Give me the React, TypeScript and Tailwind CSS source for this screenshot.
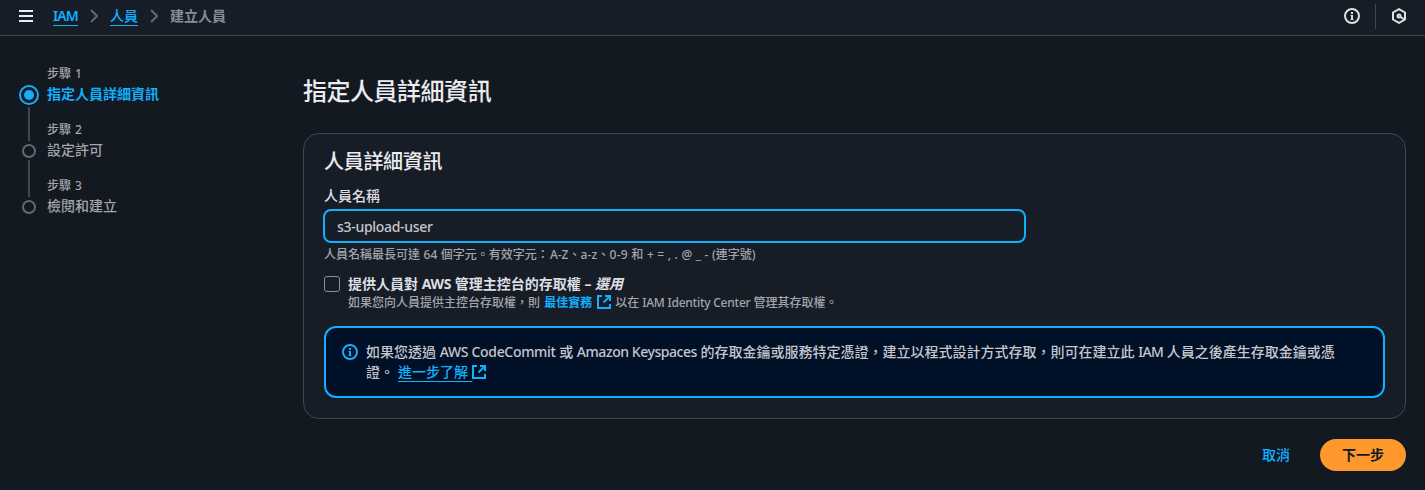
function ExternalIcon({ className }: { className: string }) {
  return (
    <svg viewBox="0 0 14 14" className={className} fill="none" stroke="currentColor" strokeWidth="2">
      <path d="M5 1H1v12h12V9" />
      <path d="M8 1h5v5" />
      <path d="M13 1L6.5 7.5" />
    </svg>
  );
}

function InfoIcon({ className }: { className: string }) {
  return (
    <svg viewBox="0 0 16 16" className={className} fill="none" stroke="currentColor" strokeWidth="2">
      <circle cx="8" cy="8" r="7" />
      <path d="M8 4v2M8 7v5" />
      <path d="M6.5 7.5H8M6.5 11.5h3" strokeWidth="1" />
    </svg>
  );
}

function Chevron() {
  return (
    <svg viewBox="0 0 8 14" className="h-3.5 w-2 text-[#656871]" fill="none" stroke="currentColor" strokeWidth="2">
      <path d="M1 1l6 6-6 6" />
    </svg>
  );
}

const steps = [
  { label: '步驟 1', title: '指定人員詳細資訊', active: true },
  { label: '步驟 2', title: '設定許可', active: false },
  { label: '步驟 3', title: '檢閱和建立', active: false },
];

export default function App() {
  return (
    <div className="flex h-[490px] w-[1425px] flex-col overflow-hidden bg-[#131920] font-['Noto_Sans','Noto_Sans_CJK_TC',sans-serif] text-sm leading-5 font-medium text-[#c6c6cd]">
      <header className="flex h-9 shrink-0 items-center border-b border-[#424650] bg-[#161d26] pb-[3px] pl-[19px]">
        <button aria-label="menu" className="flex h-3 w-3.5 flex-col justify-between">
          <span className="h-0.5 w-full bg-[#ebebf0]" />
          <span className="h-0.5 w-full bg-[#ebebf0]" />
          <span className="h-0.5 w-full bg-[#ebebf0]" />
        </button>
        <nav className="ml-5 flex items-center">
          <a className="h-[19px] w-[25px] border-b border-[#10b0ff] leading-[17px] font-semibold tracking-[-0.9px] text-[#10b0ff]">IAM</a>
          <span className="ml-3 flex"><Chevron /></span>
          <a className="ml-3 h-[19px] w-7 border-b border-[#10b0ff] leading-[17px] text-[#10b0ff]">人員</a>
          <span className="ml-3 flex"><Chevron /></span>
          <span className="ml-3 font-bold text-[#8c8c94]">建立人員</span>
        </nav>
        <div className="ml-auto flex items-center">
          <InfoIcon className="size-4 text-[#dedee3]" />
          <span className="ml-[15px] h-[25px] w-px bg-[#424650]" />
          <svg viewBox="0 0 16 16" className="mr-[18px] ml-[15px] size-4 text-[#dedee3]" fill="none" stroke="currentColor" strokeWidth="2">
            <path d="M8 1.1l6 3.4v7L8 14.9l-6-3.4v-7z" />
            <circle cx="8" cy="8" r="1.5" />
            <path d="M8.5 8.5l5 2.8" />
          </svg>
        </div>
      </header>

      <div className="flex flex-1">
        <ol className="ml-[19px] w-[284px] shrink-0 pt-[29px]">
          {steps.map((step, i) => (
            <li key={step.label} className="flex h-14">
              <div className="flex w-5 flex-col items-center">
                {i > 0 ? <span className="h-5 w-0.5 shrink-0 bg-[#424650]" /> : <span className="h-5 shrink-0" />}
                {step.active ? (
                  <span className="flex size-5 shrink-0 items-center justify-center rounded-full border-2 border-[#10b0ff]">
                    <span className="size-2.5 rounded-full bg-[#10b0ff]" />
                  </span>
                ) : (
                  <span className="mt-[3px] size-3.5 shrink-0 rounded-full border-2 border-[#656871]" />
                )}
                {i < 2 && <span className="mt-0.5 w-0.5 flex-1 bg-[#424650]" />}
              </div>
              <div className="ml-2">
                <div className="h-[19px] text-xs leading-[18px] text-[#a4a4ad] [word-spacing:1px]">{step.label}</div>
                <div className={step.active ? 'leading-5 font-bold text-[#10b0ff]' : 'leading-5 text-[#a4a4ad]'}>{step.title}</div>
              </div>
            </li>
          ))}
        </ol>

        <main className="w-[1103px] pt-10">
          <h1 className="h-[30px] text-2xl leading-[30px] tracking-[-0.48px] text-[#ebebf0]">指定人員詳細資訊</h1>
          <section className="mt-[27px] h-[286px] rounded-2xl border border-[#424650] bg-[#161d26] px-5 pt-4">
            <h2 className="h-6 text-xl leading-6 tracking-[-0.3px] text-[#ebebf0]">人員詳細資訊</h2>
            <div className="mt-3 h-5 text-[#dedee3]">人員名稱</div>
            <div className="mt-[3px] -ml-px flex h-[34px] w-[703px] items-center rounded-lg border-2 border-[#10b0ff] bg-[#161d26] pt-0.5 pl-3 tracking-[-0.3px] text-[#c6c6cd]">
              s3-upload-user
            </div>
            <div className="mt-[3px] h-4 pt-px text-xs leading-4 whitespace-nowrap text-[#a4a4ad] [word-spacing:0.45px]">
              人員名稱最長可達 64 個字元。有效字元：<span className="ml-px">A-Z</span>、<span className="tracking-[0.2px]">a-z</span>、<span className="tracking-[0.2px]">0-9</span> 和 + = , . @ _ - (連字號)
            </div>
            <div className="mt-3 flex">
              <span className="mt-0.5 size-4 rounded-[3px] border border-[#8c8c94]" />
              <div className="ml-2">
                <div className="font-bold whitespace-nowrap text-[#dedee3]">
                  提供人員對 <span className="tracking-[-0.3px]">AWS</span> 管理主控台的存取權 – <em>選用</em>
                </div>
                <div className="flex h-4 items-center text-xs leading-4 whitespace-pre text-[#a4a4ad]">
                  <span className="pt-px">如果您向人員提供主控台存取權，則 </span>
                  <a className="ml-px pt-px font-bold text-[#10b0ff]">最佳實務</a>
                  <ExternalIcon className="mr-1 ml-[5px] size-3.5 text-[#10b0ff]" />
                  <span className="pt-px">以在 <span className="tracking-[-0.25px]">IAM Identity Center</span> 管理其存取權。</span>
                </div>
              </div>
            </div>
            <div className="mt-4 flex h-[72px] rounded-xl border-2 border-[#10b0ff] bg-[#001026] pt-3.5 pl-4">
              <InfoIcon className="mt-0.5 size-4 shrink-0 text-[#10b0ff]" />
              <div className="ml-2 whitespace-nowrap">
                <div>
                  如果您透過 <span className="tracking-[-0.32px]">AWS CodeCommit</span> 或 <span className="tracking-[-0.45px]">Amazon Keyspaces</span> 的存取金鑰或服務特定憑證，建立以程式設計方式存取，則可在建立此 <span className="tracking-[-0.7px]">IAM</span> 人員之後產生存取金鑰或憑
                </div>
                <div className="flex items-center">
                  <span>證。</span>
                  <a className="ml-1 h-5 w-[74px] border-b border-[#10b0ff] text-[#10b0ff]">進一步了解</a>
                  <ExternalIcon className="size-3.5 text-[#10b0ff]" />
                </div>
              </div>
            </div>
          </section>
          <div className="mt-5 flex h-8 items-center justify-end">
            <button className="font-medium text-[#10b0ff]">取消</button>
            <button className="ml-[30px] h-8 w-[86px] rounded-full bg-[#ff982c] font-bold text-[#12191f]">下一步</button>
          </div>
        </main>
      </div>
    </div>
  );
}
